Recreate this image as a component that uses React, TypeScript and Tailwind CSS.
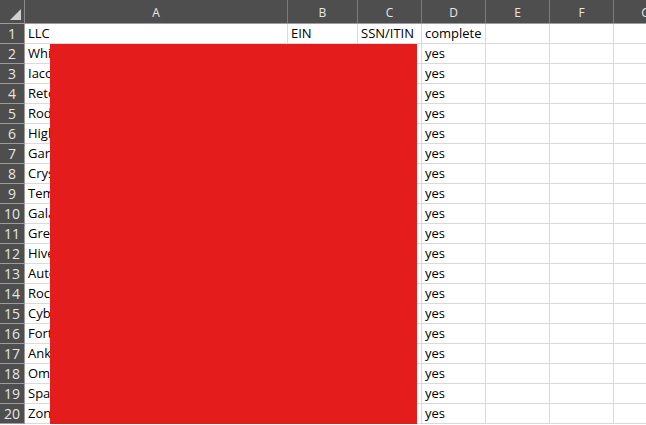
import React from "react";

const cols = [
  { l: "A", w: 263 },
  { l: "B", w: 70 },
  { l: "C", w: 64 },
  { l: "D", w: 64 },
  { l: "E", w: 64 },
  { l: "F", w: 64 },
  { l: "G", w: 64 },
];

const aNames = [
  "LLC",
  "Whi",
  "Iaco",
  "Reto",
  "Rod",
  "High",
  "Gar",
  "Crys",
  "Tem",
  "Gala",
  "Grea",
  "Hive",
  "Auto",
  "Roc",
  "Cybe",
  "Fort",
  "Ank",
  "Ome",
  "Spa",
  "Zon",
];

export default function App() {
  const font = { fontFamily: '"Open Sans", "Liberation Sans", sans-serif' };
  return (
    <div
      className="relative w-[646px] h-[425px] overflow-hidden bg-white"
      style={font}
    >
      {/* header row */}
      <div className="flex h-[24px] bg-[#4e4e4e] border-b border-[#9c9c9c]">
        <div className="relative w-[25px] shrink-0 border-r border-[#8a8a8a]">
          <svg className="absolute right-[3px] bottom-[3px]" width="11" height="11" viewBox="0 0 11 11">
            <polygon points="11,0 11,11 0,11" fill="#d0d0d0" />
          </svg>
        </div>
        {cols.map((c) => (
          <div
            key={c.l}
            style={{ width: c.w }}
            className="shrink-0 flex items-center justify-center pt-[3px] text-[12px] text-[#e6e6e6] border-r border-[#7a7a7a]"
          >
            {c.l}
          </div>
        ))}
      </div>
      {/* body */}
      {aNames.map((name, i) => {
        const row = i + 1;
        const cells = [
          name,
          row === 1 ? "EIN" : "",
          row === 1 ? "SSN/ITIN" : "",
          row === 1 ? "complete" : "yes",
          "",
          "",
          "",
        ];
        return (
          <div key={row} className="flex h-[20px]">
            <div className="w-[25px] shrink-0 bg-[#4e4e4e] border-r border-[#9c9c9c] border-b border-b-[#9c9c9c] flex items-center justify-center text-[14px] text-[#e6e6e6] leading-none pt-[1px]">
              {row}
            </div>
            {cells.map((t, j) => (
              <div
                key={j}
                style={{ width: cols[j].w }}
                className="shrink-0 border-r border-b border-[#dadada] pl-[3px] text-[13px] leading-[19px] text-black whitespace-nowrap overflow-hidden"
              >
                {t}
              </div>
            ))}
          </div>
        );
      })}
      {/* redaction */}
      <div className="absolute left-[50px] top-[44px] w-[367px] h-[380px] bg-[#e41c1c]" />
    </div>
  );
}
